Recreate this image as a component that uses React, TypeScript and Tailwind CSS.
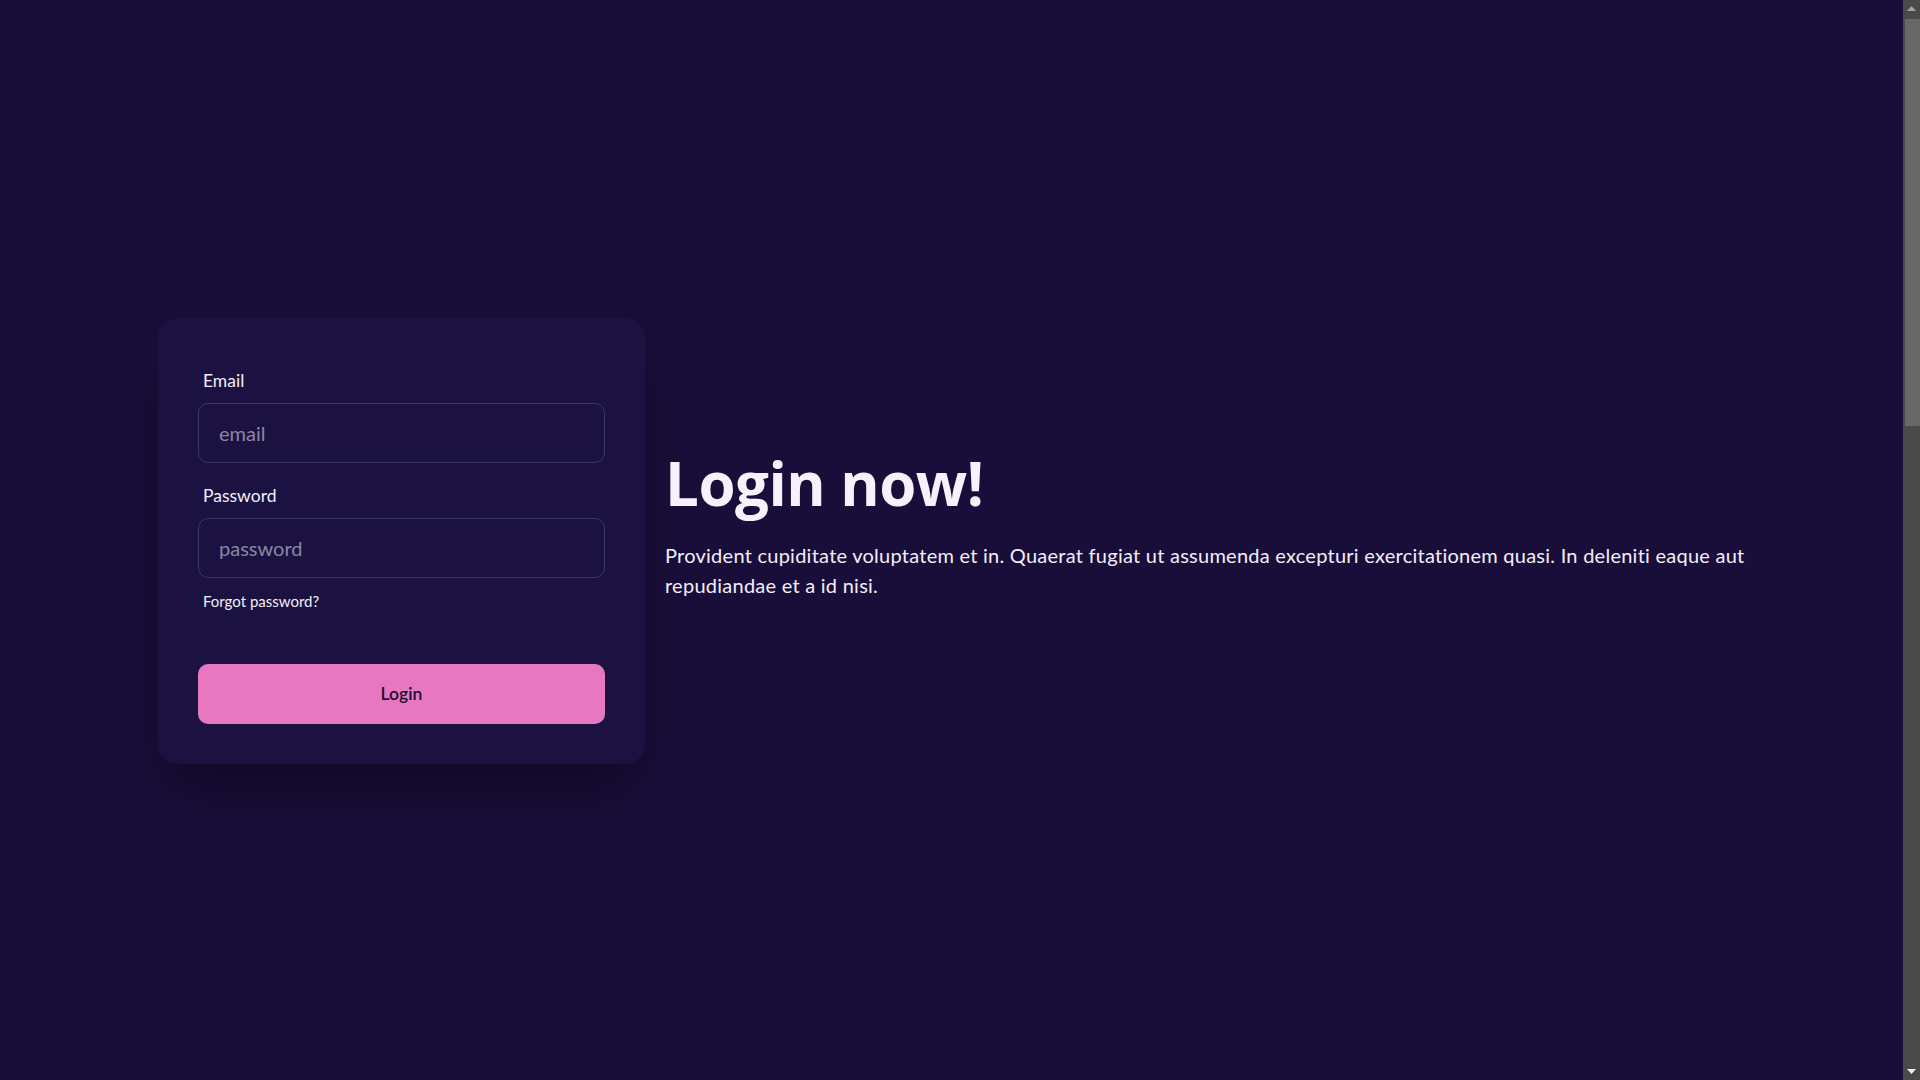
import React from 'react';

const Scrollbar = () => (
  <aside className="sticky top-0 self-start h-[1080px] w-[17px] shrink-0 bg-[#4a4a4a] flex flex-col">
    <div className="h-[17px] flex items-center justify-center">
      <svg width="9" height="5" viewBox="0 0 9 5"><path d="M4.5 0L9 5H0z" fill="#a3a3a3" /></svg>
    </div>
    <div className="flex-1 pl-[2px] pt-[2px]">
      <div className="h-[407px] bg-[#686868]"></div>
    </div>
    <div className="h-[17px] flex items-center justify-center">
      <svg width="9" height="5" viewBox="0 0 9 5"><path d="M0 0H9L4.5 5z" fill="#f0f0f0" /></svg>
    </div>
  </aside>
);

const App: React.FC = () => {
  return (
    <div className="w-full flex bg-[#190e3a] font-['Lato','Noto_Sans',sans-serif] text-[#f2eef8]">
      <main className="flex-1 min-w-0">
        {/* Hero */}
        <div className="min-h-[1080px] flex items-center justify-center">
          <div className="w-[1627px] px-[20px] flex items-center gap-[20px]">
            {/* Login card */}
            <div className="mt-[2px] w-[487px] shrink-0 rounded-[20px] bg-[#1c1241] shadow-[0_31px_62px_-15px_rgba(0,0,0,0.45)]">
              <form className="p-[40px] flex flex-col gap-[10px]" onSubmit={(e) => e.preventDefault()}>
                <div className="flex flex-col">
                  <label className="px-[5px] py-[10px] text-[17.5px] leading-[25px] text-[#f2eef8]">Email</label>
                  <input
                    type="email"
                    placeholder="email"
                    className="h-[60px] w-full rounded-[10px] border border-[#3e3567] bg-transparent px-[20px] text-[20px] text-[#f2eef8] placeholder:text-[#8a86a3] outline-none"
                  />
                </div>
                <div className="flex flex-col">
                  <label className="px-[5px] py-[10px] text-[17.5px] leading-[25px] text-[#f2eef8]">Password</label>
                  <input
                    type="password"
                    placeholder="password"
                    className="h-[60px] w-full rounded-[10px] border border-[#3e3567] bg-transparent px-[20px] text-[20px] text-[#f2eef8] placeholder:text-[#8a86a3] outline-none"
                  />
                  <div className="px-[5px] py-[10px] leading-[25px]">
                    <a href="#" className="text-[15px] text-[#f2eef8] hover:underline">Forgot password?</a>
                  </div>
                </div>
                <div className="mt-[30px]">
                  <button className="h-[60px] w-full rounded-[10px] bg-[#e778bf] text-[17.5px] font-semibold text-[#1a0e33]">
                    Login
                  </button>
                </div>
              </form>
            </div>

            {/* Copy */}
            <div className="flex-1 text-left">
              <h1 className="pt-[3px] font-['Open_Sans','Lato',sans-serif] text-[60px] leading-[60px] font-bold tracking-[-0.5px] text-[#f6f2fb]">Login now!</h1>
              <p className="pt-[27px] pb-[30px] text-[20px] leading-[30px] tracking-[0.25px] text-[#f2eef8]">
                Provident cupiditate voluptatem et in. Quaerat fugiat ut assumenda excepturi exercitationem quasi. In deleniti eaque aut repudiandae et a id nisi.
              </p>
            </div>
          </div>
        </div>

        {/* rest of the page, below the fold */}
        <div className="h-[1702px]"></div>
      </main>
      <Scrollbar />
    </div>
  );
};

export default App;
